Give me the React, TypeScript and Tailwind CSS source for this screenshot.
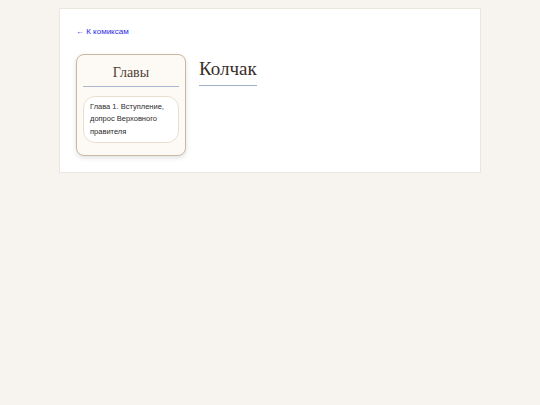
export default function App() {
  return (
    <div className="min-h-screen bg-[#f7f4ef] pt-2" style={{ fontFamily: '"Liberation Sans", Arial, sans-serif' }}>
      <div className="mx-auto w-[422px] border border-[#ebe7e0] bg-white px-4 pt-4 pb-4">
        <a href="#" className="block pt-[1px] text-[8px] font-normal leading-[12px] text-[#2a2ae6]">← К комиксам</a>

        <div className="mt-[16px] flex items-start gap-[13px]">
          {/* Chapters sidebar */}
          <aside className="w-[110px] rounded-lg border border-[#cbb8a0] bg-[#fdfaf5] px-[6px] pt-[9px] pb-[12px] shadow-[0_2px_5px_rgba(0,0,0,0.12)]">
            <h2 className="border-b border-[#a9b8cc] pb-[5px] text-center text-[14px] leading-[17px] text-[#4f4035]" style={{ fontFamily: '"Liberation Serif", serif' }}>
              Главы
            </h2>
            <div className="mt-[9px] rounded-[12px] border border-[#eadfce] bg-white px-[6px] py-[4px] text-[7.5px] leading-[12.3px] text-[#2b2b2b]">
              Глава 1. Вступление, допрос Верховного правителя
            </div>
          </aside>

          <div>
            <h1 className="inline-block border-b border-[#9fb0c6] pb-[5px] pt-[4px] text-[19px] leading-[22px] text-[#3a2e28]" style={{ fontFamily: '"Liberation Serif", serif' }}>
              Колчак
            </h1>
          </div>
        </div>
      </div>
    </div>
  );
}
